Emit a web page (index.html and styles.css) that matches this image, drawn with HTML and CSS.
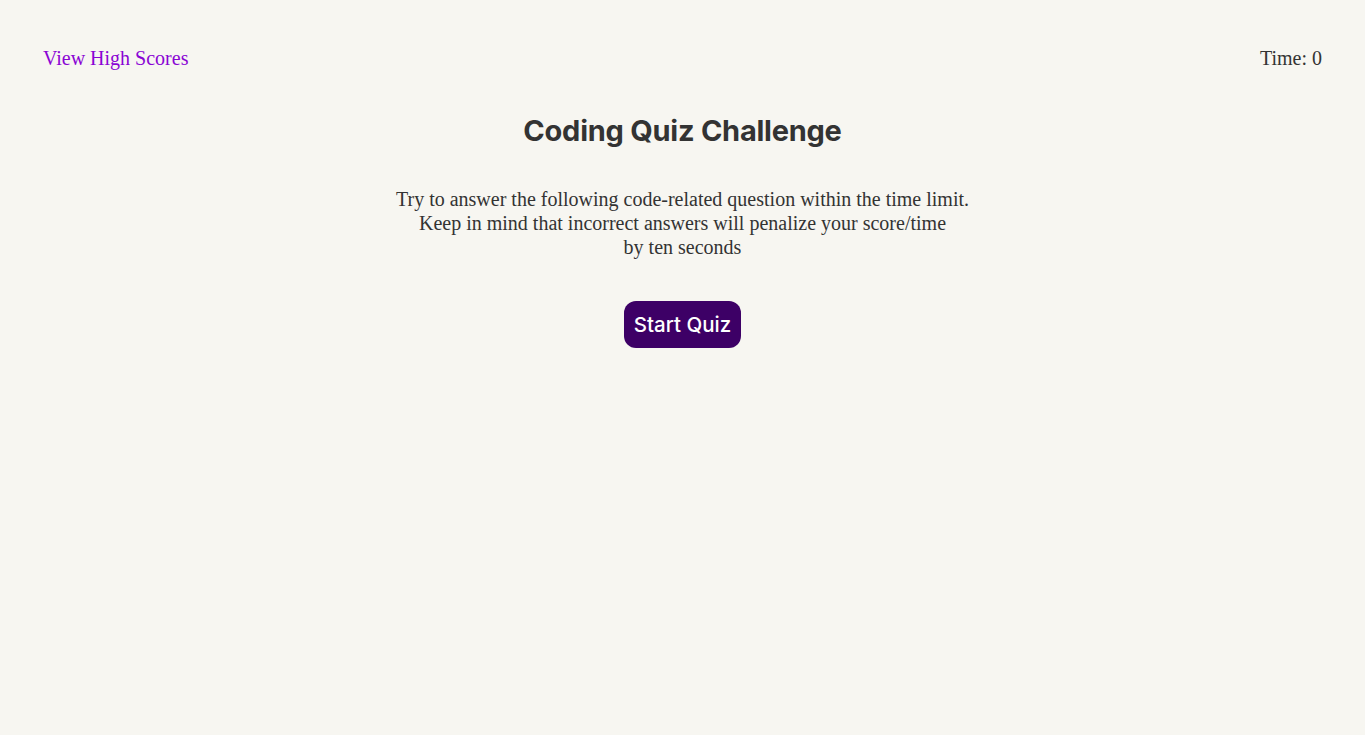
FILE: index.html
```html
<!DOCTYPE html>
<html lang="en">
<head>
<meta charset="utf-8">
<title>Coding Quiz Challenge</title>
<link rel="stylesheet" href="styles.css">
</head>
<body>
<header class="top-bar">
  <a class="high-scores" href="#">View High Scores</a>
  <div class="timer">Time: <span>0</span></div>
</header>
<main class="intro">
  <h1 class="title">Coding Quiz Challenge</h1>
  <p class="lead">Try to answer the following code-related question within the time limit.<br>Keep in mind that incorrect answers will penalize your score/time<br>by ten seconds</p>
  <button class="start-btn" type="button">Start Quiz</button>
</main>
</body>
</html>
```
FILE: styles.css
```css
html, body {
  margin: 0;
  padding: 0;
  background: #f7f6f1;
  color: #333333;
  font-family: "Liberation Serif", "Times New Roman", serif;
}
.top-bar {
  display: flex;
  justify-content: space-between;
  align-items: center;
  padding: 46px 43px 0 43px;
  font-size: 20px;
  line-height: 24px;
}
.high-scores {
  color: #8a05d4;
  text-decoration: none;
}
.timer {
  color: #333333;
}
.intro {
  display: flex;
  flex-direction: column;
  align-items: center;
  text-align: center;
}
.title {
  font-family: Inter, "Noto Sans", sans-serif;
  font-weight: 700;
  font-size: 29px;
  line-height: 36px;
  margin: 43px 0 0 0;
  color: #333333;
  letter-spacing: -0.25px;
}
.lead {
  font-size: 20px;
  line-height: 24px;
  margin: 38px 0 0 0;
}
.start-btn {
  margin-top: 42px;
  background: #3d0066;
  color: #ffffff;
  border: none;
  border-radius: 12px;
  font-family: Inter, "Noto Sans", sans-serif;
  font-size: 20.5px;
  font-weight: 500;
  height: 47px;
  padding: 0 10px;
  cursor: pointer;
}
```
